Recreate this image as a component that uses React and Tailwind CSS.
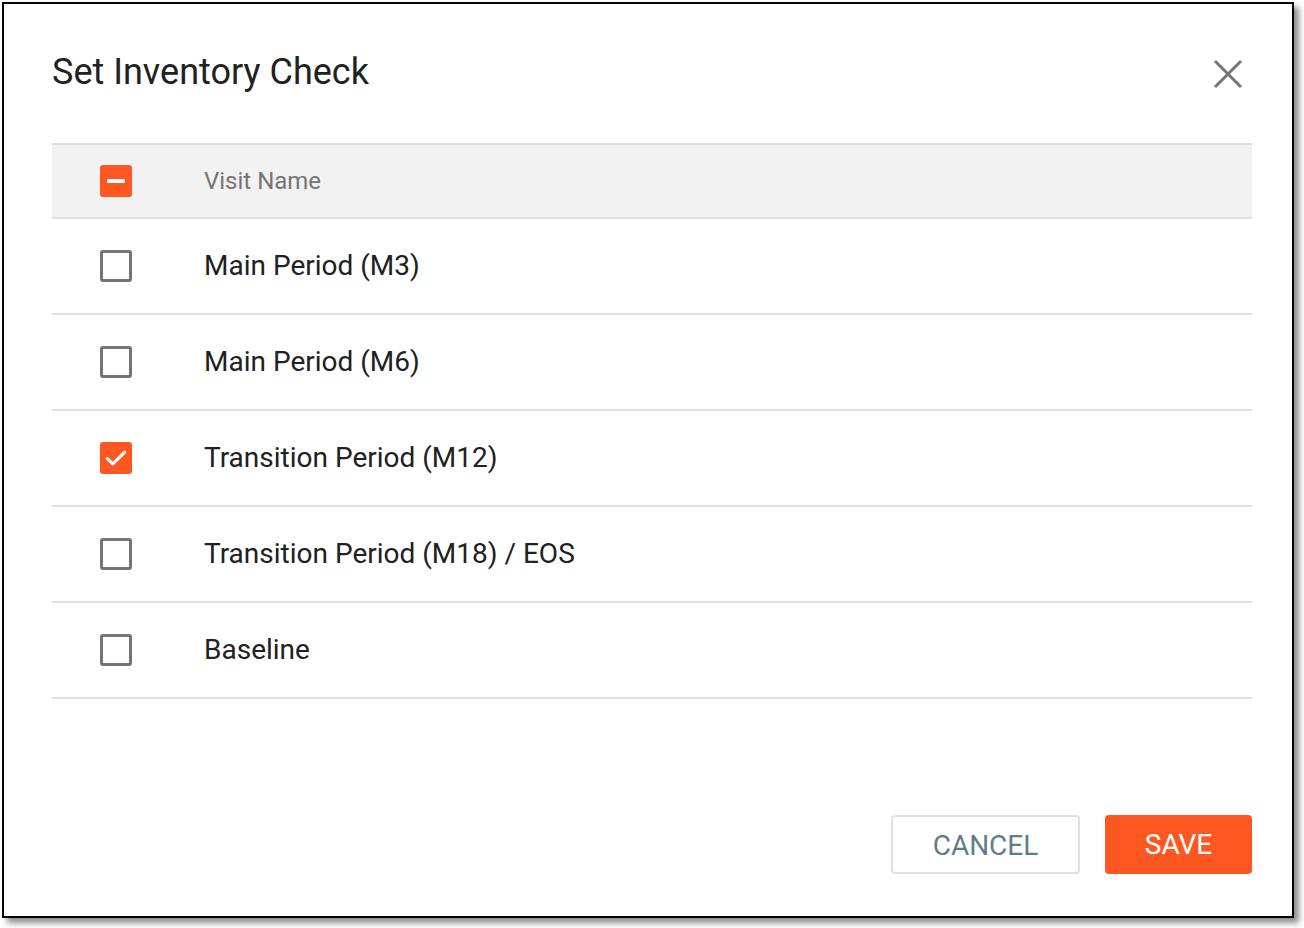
import React, { useState } from "react";

const visits = [
  { name: "Main Period (M3)", checked: false },
  { name: "Main Period (M6)", checked: false },
  { name: "Transition Period (M12)", checked: true },
  { name: "Transition Period (M18) / EOS", checked: false },
  { name: "Baseline", checked: false },
];

function Checkbox({ state }) {
  if (state === "checked") {
    return (
      <span className="flex h-[32px] w-[32px] items-center justify-center rounded-[3px] bg-[#ff5722]">
        <svg width="26" height="26" viewBox="0 0 24 24" fill="none">
          <path d="M4 12.5l5 5L20 6.5" stroke="white" strokeWidth="2.9" strokeLinecap="round" strokeLinejoin="round" />
        </svg>
      </span>
    );
  }
  if (state === "indeterminate") {
    return (
      <span className="flex h-[32px] w-[32px] items-center justify-center rounded-[3px] bg-[#ff5722]">
        <span className="h-[4px] w-[18px] rounded-[1px] bg-white" />
      </span>
    );
  }
  return <span className="block h-[32px] w-[32px] rounded-[3px] border-[3px] border-[#757575] bg-white" />;
}

export default function App() {
  const [rows] = useState(visits);

  return (
    <div className="min-h-[928px] bg-white pl-[2px] pt-[2px]" style={{ fontFamily: "Roboto, 'Liberation Sans', sans-serif" }}>
      <div className="flex h-[916px] w-[1292px] flex-col border-2 border-black bg-white pl-[48px] pr-[40px] shadow-[5px_5px_6px_rgba(0,0,0,0.45)]">
        {/* Title */}
        <div className="flex h-[139px] items-center justify-between">
          <h1 className="mb-[4px] text-[36px] leading-none text-[#212121]">Set Inventory Check</h1>
          <button className="mr-[8px] text-[#757575]">
            <svg width="32" height="32" viewBox="0 0 32 32" fill="none">
              <path d="M3 3l26 26M29 3L3 29" stroke="currentColor" strokeWidth="3" />
            </svg>
          </button>
        </div>

        {/* Table */}
        <div className="w-[1200px]">
          <div className="flex h-[76px] items-center border-y-2 border-[#e0e0e0] bg-[#f2f2f2]">
            <div className="w-[152px] pl-[48px]">
              <Checkbox state="indeterminate" />
            </div>
            <span className="text-[24px] text-[#757575]">Visit Name</span>
          </div>
          {rows.map((r) => (
            <div key={r.name} className="flex h-[96px] items-center border-b-2 border-[#e0e0e0]">
              <div className="w-[152px] pl-[48px]">
                <Checkbox state={r.checked ? "checked" : "unchecked"} />
              </div>
              <span className="text-[28px] text-[#212121]">{r.name}</span>
            </div>
          ))}
        </div>

        {/* Actions */}
        <div className="mt-auto mb-[42px] flex justify-end gap-[25px]">
          <button className="h-[59px] w-[189px] rounded-[4px] border-2 border-[#e0e0e0] bg-white pt-[2px] text-[28px] text-[#607d8b]">
            CANCEL
          </button>
          <button className="h-[59px] w-[147px] rounded-[4px] bg-[#ff5722] text-[28px] text-white">
            SAVE
          </button>
        </div>
      </div>
    </div>
  );
}
